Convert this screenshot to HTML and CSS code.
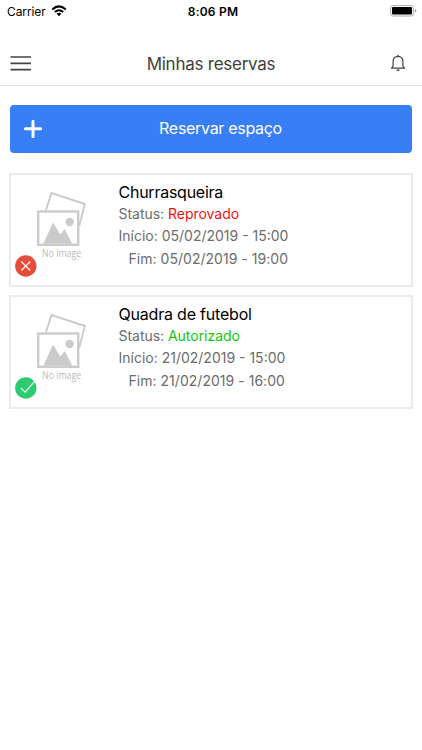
FILE: index.html
```html
<!DOCTYPE html>
<html lang="pt-BR">
<head>
<meta charset="utf-8">
<title>Minhas reservas</title>
<link rel="stylesheet" href="styles.css">
</head>
<body>
<svg class="defs" aria-hidden="true">
  <symbol id="photos" viewBox="0 0 50 55">
    <path d="M10 18 15.5 1 48.9 12 43.2 34" fill="none" stroke="#cbcbcb" stroke-width="1.9"/>
    <rect x="2.2" y="19.5" width="40" height="33.3" fill="#fff" stroke="#cbcbcb" stroke-width="2.4"/>
    <path d="M7.4 51.8 17 30.5 24.2 42.5 28.7 37 36.3 51.8Z" fill="#cbcbcb"/>
    <circle cx="33.6" cy="30" r="4.2" fill="#cbcbcb"/>
  </symbol>
</svg>
<header class="statusbar">
  <div class="carrier"><span>Carrier</span>
    <svg class="wifi" width="16" height="12" viewBox="0 0 16 12"><g fill="none" stroke="#000" stroke-width="2"><path d="M1.3 4.4Q8-1.6 14.7 4.4"/><path d="M3.8 7.1Q8 3.4 12.2 7.1"/></g><path d="M5.6 8.7Q8 6.9 10.4 8.7L8 11.2Z"/></svg>
  </div>
  <span class="time">8:06 PM</span>
  <svg class="battery" width="27" height="12" viewBox="0 0 27 12"><rect x=".6" y=".6" width="22.8" height="10.4" rx="2.2" fill="#fff" stroke="#aaa"/><rect x="2" y="2" width="20" height="7.6" rx="1"/><path d="M24.8 4.1Q26.4 4.5 26.4 5.8T24.8 7.5Z" fill="#999"/></svg>
</header>
<nav class="navbar">
  <svg width="22" height="18" viewBox="0 0 22 18"><path d="M.5 3H21M.5 9.3H21M.5 15.6H21" stroke="#444" stroke-width="1.7"/></svg>
  <h1>Minhas reservas</h1>
  <svg class="bell" width="16" height="18" viewBox="0 0 16 18"><path d="M1.5 14.2H14.5L12.9 12.2V7.2Q12.7 2.5 8 2.4 3.3 2.5 3.1 7.2V12.2Z" fill="none" stroke="#444" stroke-width="1.2" stroke-linejoin="round"/><path d="M7 2.3V1.4Q8 .4 9 1.4V2.3ZM6.1 15.5H9.9Q9.3 17 8 17T6.1 15.5Z" fill="#444"/></svg>
</nav>
<main>
  <button class="reserve">
    <svg width="20" height="20" viewBox="0 0 20 20"><path d="M10 2.2V17.4M2.4 9.8H17.6" stroke="#fff" stroke-width="3" stroke-linecap="round"/></svg>
    <span>Reservar espaço</span>
  </button>
  <article class="card">
    <div class="thumb">
      <svg class="photo" width="50" height="55"><use href="#photos"/></svg>
      <span class="caption">No image</span>
      <svg class="badge" width="22" height="22" viewBox="0 0 22 22"><circle cx="10.8" cy="11" r="10.7" fill="#e64c3c"/><path d="M6.3 6.5 15.3 15.5M15.3 6.5 6.3 15.5" stroke="#fff" stroke-width="1.1"/></svg>
    </div>
    <div class="info">
      <h2 class="name-a">Churrasqueira</h2>
      <p class="status">Status: <b class="rejected">Reprovado</b></p>
      <p class="start">Início: 05/02/2019 - 15:00</p>
      <p class="end">Fim: 05/02/2019 - 19:00</p>
    </div>
  </article>
  <article class="card">
    <div class="thumb">
      <svg class="photo" width="50" height="55"><use href="#photos"/></svg>
      <span class="caption">No image</span>
      <svg class="badge" width="22" height="22" viewBox="0 0 22 22"><circle cx="10.8" cy="11" r="10.7" fill="#2ecc71"/><path d="M5.8 10.8 10.2 15.2 20.2 3.6" fill="none" stroke="#fff" stroke-width="1.1"/></svg>
    </div>
    <div class="info">
      <h2 class="name-b">Quadra de futebol</h2>
      <p class="status">Status: <b class="approved">Autorizado</b></p>
      <p class="start">Início: 21/02/2019 - 15:00</p>
      <p class="end">Fim: 21/02/2019 - 16:00</p>
    </div>
  </article>
</main>
</body>
</html>
```
FILE: styles.css
```css
* { box-sizing: border-box; }
body {
  margin: 0;
  min-height: 750px;
  background: #fff;
  color: #000;
  font-family: Inter, "Liberation Sans", sans-serif;
}
svg { display: block; flex: none; }
.defs { position: absolute; width: 0; height: 0; }
h1, h2, p { margin: 0; font-weight: 400; white-space: nowrap; }

.statusbar {
  display: grid;
  grid-template-columns: 1fr auto 1fr;
  align-items: center;
  height: 22px;
  padding: 0 5px 0 7px;
}
.carrier { display: flex; align-items: center; gap: 5px; font-size: 12px; letter-spacing: -.1px; }
.time { padding-left: 2px; font-size: 12px; font-weight: 600; letter-spacing: .2px; }
.battery { justify-self: end; }

.navbar {
  display: grid;
  grid-template-columns: 1fr auto 1fr;
  align-items: center;
  height: 64px;
  padding: 19px 10px 0;
  border-bottom: 1px solid #dedede;
}
.navbar h1 {
  padding-top: 1px;
  font-size: 17px;
  font-weight: 420;
  line-height: 24px;
  letter-spacing: -.25px;
  color: #3e3e3e;
}
.bell { justify-self: end; margin-right: 6px; }

main { padding: 19px 9px 0; }
.reserve {
  display: grid;
  grid-template-columns: 20px 1fr 2px;
  align-items: center;
  width: 402px;
  height: 48px;
  margin: 0 0 20px 1px;
  padding: 0 12px 0 13px;
  border: 0;
  border-radius: 4px;
  background: #387ef5;
  color: #fff;
  font: 400 16px/24px Inter, "Liberation Sans", sans-serif;
  letter-spacing: -.3px;
}
.reserve span { padding-bottom: 2px; }

.card {
  display: grid;
  grid-template-columns: 106.5px 1fr;
  width: 404px;
  height: 114px;
  margin-bottom: 8px;
  border: 2px solid #ebebeb;
}
.thumb { position: relative; padding: 17px 0 0 25px; }
.caption {
  display: block;
  margin: -1px 0 0 6px;
  font: 400 10px/14px "Open Sans", sans-serif;
  color: #bcbcbc;
  white-space: nowrap;
  transform: scaleX(.88);
  transform-origin: left;
}
.badge { position: absolute; left: 4px; top: 80px; }
.info { padding: 6px 0 0 1px; }
.info h2 { font-size: 16px; line-height: 22px; }
.info .name-a { letter-spacing: -.25px; }
.info .name-b { letter-spacing: -.2px; }
.info p { font-size: 14px; line-height: 22.4px; color: #6c6c6c; }
.info .status { letter-spacing: -.03px; }
.info b { font-weight: 400; }
.info .end { padding-left: 10px; letter-spacing: .03px; }
.info .rejected { color: #ee1212; }
.info .approved { color: #16c60c; }
```
